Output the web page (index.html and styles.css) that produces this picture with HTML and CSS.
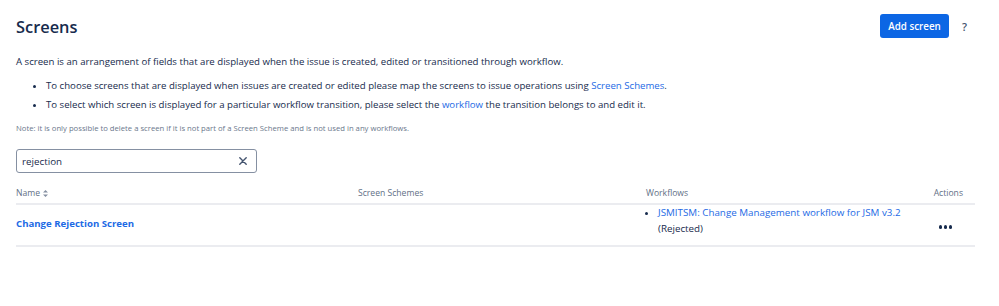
FILE: index.html
```html
<!DOCTYPE html>
<html>
<head>
<meta charset="utf-8">
<link rel="stylesheet" href="styles.css">
</head>
<body>
<div class="page">
  <header class="head">
    <h1 class="title">Screens</h1>
    <div class="head-actions">
      <button class="btn-primary">Add screen</button>
      <span class="help">?</span>
    </div>
  </header>
  <p class="desc">A screen is an arrangement of fields that are displayed when the issue is created, edited or transitioned through workflow.</p>
  <ul class="bullets">
    <li>To choose screens that are displayed when issues are created or edited please map the screens to issue operations using <a class="link" href="#">Screen Schemes</a>.</li>
    <li>To select which screen is displayed for a particular workflow transition, please select the <a class="link" href="#">workflow</a> the transition belongs to and edit it.</li>
  </ul>
  <p class="note">Note: it is only possible to delete a screen if it is not part of a Screen Scheme and is not used in any workflows.</p>
  <div class="search">
    <span class="search-text">rejection</span>
    <svg class="clear" width="8" height="8" viewBox="0 0 8 8"><path d="M0.8 0.8 L7.2 7.2 M7.2 0.8 L0.8 7.2" stroke="#44546F" stroke-width="1.4" stroke-linecap="round"/></svg>
  </div>
  <div class="table">
    <div class="row row-head">
      <div class="c-name">Name <svg class="sort" width="5" height="7" viewBox="0 0 5 7"><path d="M2.5 0 L5 2.5 H0 Z M2.5 7 L5 4.5 H0 Z" fill="#8590A2"/></svg></div>
      <div class="c-schemes">Screen Schemes</div>
      <div class="c-wf">Workflows</div>
      <div class="c-act">Actions</div>
    </div>
    <div class="row row-body">
      <div class="c-name"><a class="name-link" href="#">Change Rejection Screen</a></div>
      <div class="c-schemes"></div>
      <div class="c-wf">
        <ul class="wf-list"><li><a class="link" href="#">JSMITSM: Change Management workflow for JSM v3.2</a><br>(Rejected)</li></ul>
      </div>
      <div class="c-act c-dots"><span class="dots"><i></i><i></i><i></i></span></div>
    </div>
  </div>
</div>
</body>
</html>
```
FILE: styles.css
```css
* { box-sizing: border-box; }
body {
  margin: 0;
  background: #fff;
  font-family: "Open Sans", "Noto Sans", sans-serif;
  color: #172B4D;
  font-size: 9.65px;
}
.page { padding: 0 24px 0 16px; }
.head {
  display: flex;
  align-items: center;
  justify-content: space-between;
  height: 52px;
  padding-right: 8px;
}
.title {
  margin: 0;
  font-size: 16.4px;
  font-weight: 600;
  color: #172B4D;
}
.head-actions { display: flex; align-items: center; gap: 13px; }
.btn-primary {
  background: #0C66E4;
  color: #fff;
  border: 0;
  border-radius: 3px;
  height: 24px;
  width: 69px;
  padding: 0;
  font-family: inherit;
  font-weight: 600;
  font-size: 9.8px;
}
.help { font-size: 11px; color: #44546F; font-weight: 600; }
.desc { margin: 2px 0 0; line-height: 16px; }
.bullets { margin: 6px 0 0; padding-left: 30px; line-height: 19px; }
.link { color: #1D6AE5; text-decoration: none; }
.note { margin: 8px 0 0; font-size: 7.7px; color: #6B778C; line-height: 12px; }
.search {
  margin-top: 15px;
  width: 241px;
  height: 24px;
  border: 1px solid #8590A2;
  border-radius: 3px;
  display: flex;
  align-items: center;
  justify-content: space-between;
  padding: 0 9px 0 5px;
}
.search-text { font-size: 9.8px; }
.clear { display: block; }
.table { margin-top: 9px; width: 959px; }
.row { display: grid; grid-template-columns: 342px 288px 1fr 50px; }
.row-head {
  color: #626F86;
  font-size: 8.6px;
  height: 23px;
  align-items: center;
  border-bottom: 2px solid #EBECF0;
}
.sort { vertical-align: -1px; margin-left: 1px; }
.c-act { text-align: right; padding-right: 12px; }
.row-body {
  align-items: center;
  border-bottom: 2px solid #EBECF0;
  padding: 0 0 8px;
}
.row-body .c-name { padding-top: 4px; }
.name-link { color: #1D6AE5; font-weight: 700; text-decoration: none; }
.wf-list { margin: 0; padding-left: 12px; line-height: 16px; font-size: 9.8px; }
.wf-list li::marker { font-size: 9px; }
.c-dots { padding-right: 23px; padding-top: 8px; }
.dots { display: inline-flex; gap: 1.5px; }
.dots i { width: 3.3px; height: 3.3px; border-radius: 50%; background: #172B4D; display: block; }
```
